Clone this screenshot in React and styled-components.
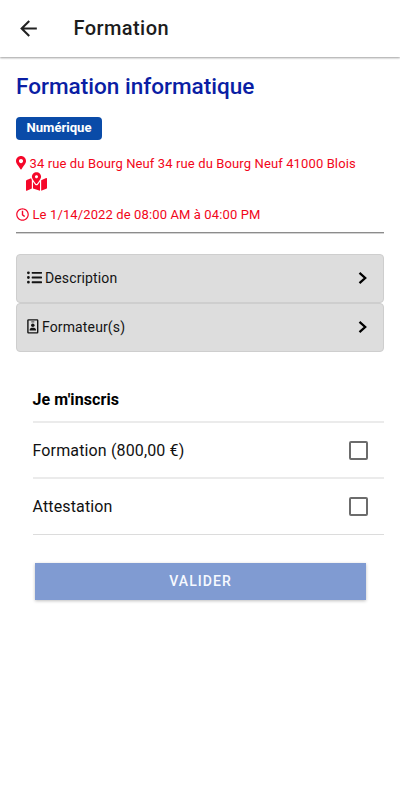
import React from 'react';
import styled, { createGlobalStyle } from 'styled-components';
import { MdArrowBack } from 'react-icons/md';
import { FaListUl, FaMapMarkedAlt, FaMapMarkerAlt, FaRegClock } from 'react-icons/fa';

const GlobalStyle = createGlobalStyle`
  * {
    box-sizing: border-box;
  }

  body {
    margin: 0;
    background: #fff;
    color: #000;
    font-family: Roboto, sans-serif;
  }
`;

const Page = styled.div`
  min-height: 800px;
  background: #fff;
`;

const Toolbar = styled.header`
  display: flex;
  align-items: center;
  height: 57px;
  padding-left: 16px;
  box-shadow: 0 1px 2px rgba(0, 0, 0, 0.38);
`;

const BackButton = styled.button`
  display: flex;
  padding: 0;
  border: none;
  background: none;
  color: #222;
  font-size: 25px;
`;

const ToolbarTitle = styled.h1`
  margin: 0 0 2px 32.5px;
  font-size: 20px;
  line-height: 24px;
  font-weight: 500;
  letter-spacing: 0.42px;
  color: #1c1c1c;
`;

const Content = styled.main`
  padding: 17px 16px 0;
`;

const CourseTitle = styled.h2`
  margin: 0;
  font-size: 22.55px;
  line-height: 26px;
  font-weight: 500;
  color: #0a1ea4;
`;

const Badge = styled.span`
  display: block;
  width: 86px;
  height: 23px;
  margin-top: 17px;
  border-radius: 4px;
  background: #0a4ba8;
  color: #fff;
  font-size: 13.1px;
  line-height: 22px;
  font-weight: 700;
  text-align: center;
`;

const InfoLine = styled.div`
  display: flex;
  align-items: center;
  gap: 3.5px;
  height: 18px;
  margin-top: ${(props) => props.$top};
  padding-left: ${(props) => props.$indent || 0};
  font-size: 13px;
  color: #f5082a;
  white-space: nowrap;

  svg {
    flex: none;
  }
`;

const PinIcon = styled(FaMapMarkerAlt)`
  width: 10px;
  height: 13.5px;
`;

const InfoText = styled.span`
  letter-spacing: 0.12px;
  color: #f2061a;
`;

const Divider = styled.hr`
  height: 2px;
  margin: 9px 0 20px;
  border: none;
  border-top: 1px solid #8c8c8c;
  background: #d2d2d2;
`;

const Panel = styled.button`
  display: flex;
  align-items: center;
  width: 100%;
  height: 49px;
  padding: 0 15px 2px 10px;
  border: 1px solid #cecece;
  border-radius: 4px;
  background: #ddd;
  color: #141414;
  font-family: inherit;
  font-size: 14px;
  text-align: left;
`;

const PanelLabel = styled.span`
  flex: 1;
  margin-left: 3px;
  letter-spacing: 0.13px;
`;

const Form = styled.form`
  margin: 24px 0 0 16.5px;
`;

const Row = styled.label`
  display: flex;
  align-items: center;
  justify-content: space-between;
  height: ${(props) => props.$height || '56px'};
  padding-right: 16px;
  border-bottom: ${(props) => props.$line || '2px solid #ebebeb'};
  font-size: 16px;
  letter-spacing: 0.14px;
  color: #111;
`;

const RowHeading = styled.strong`
  padding-top: 2px;
  font-size: 16px;
  font-weight: 700;
  letter-spacing: 0.1px;
  color: #000;
`;

const Checkbox = styled.input`
  appearance: none;
  width: 19px;
  height: 19px;
  margin: 0;
  border: 2px solid #6c6c6c;
  border-radius: 2px;
`;

const SubmitButton = styled.button`
  display: block;
  width: 331px;
  height: 37px;
  margin: 28px 0 0 2.5px;
  padding: 0 0 2px;
  border: none;
  background: #809bd2;
  box-shadow: 0 1px 3px rgba(0, 0, 0, 0.25);
  color: #f6f9ff;
  font-family: inherit;
  font-size: 14px;
  font-weight: 500;
  letter-spacing: 1.05px;
`;

const TrainerIcon = () => (
  <svg width="12" height="15" viewBox="0 0 12 15" fill="none">
    <rect x="0.9" y="0.9" width="9.8" height="13" rx="0.6" stroke="currentColor" strokeWidth="1.4" />
    <path d="M4.3 2.9h3" stroke="currentColor" strokeWidth="0.8" />
    <circle cx="5.8" cy="6.2" r="1.75" fill="currentColor" />
    <path d="M2.6 11.6v-.8c0-1.5 1.4-2.1 3.2-2.1s3.2.6 3.2 2.1v.8z" fill="currentColor" />
  </svg>
);

const Chevron = () => (
  <svg width="10" height="14" viewBox="0 0 10 14" fill="none">
    <path d="M1.5 1.8 7.2 7l-5.7 5.2" stroke="#000" strokeWidth="2.3" />
  </svg>
);

const options = ['Formation (800,00 €)', 'Attestation'];

const App = () => (
  <>
    <GlobalStyle />
    <Page>
      <Toolbar>
        <BackButton aria-label="Retour">
          <MdArrowBack />
        </BackButton>
        <ToolbarTitle>Formation</ToolbarTitle>
      </Toolbar>
      <Content>
        <CourseTitle>Formation informatique</CourseTitle>
        <Badge>Numérique</Badge>
        <InfoLine $top="14px">
          <PinIcon />
          <InfoText>34 rue du Bourg Neuf 34 rue du Bourg Neuf 41000 Blois</InfoText>
        </InfoLine>
        <InfoLine $top="0" $indent="10px">
          <FaMapMarkedAlt size={21} />
        </InfoLine>
        <InfoLine $top="15px">
          <FaRegClock size={13} />
          <InfoText>Le 1/14/2022 de 08:00 AM à 04:00 PM</InfoText>
        </InfoLine>
        <Divider />
        <Panel>
          <FaListUl size={15} />
          <PanelLabel>Description</PanelLabel>
          <Chevron />
        </Panel>
        <Panel>
          <TrainerIcon />
          <PanelLabel>Formateur(s)</PanelLabel>
          <Chevron />
        </Panel>
        <Form>
          <Row as="div" $height="47px">
            <RowHeading>Je m'inscris</RowHeading>
          </Row>
          {options.map((option, index) => (
            <Row key={option} $line={index === options.length - 1 ? '1px solid #dcdcdc' : undefined}>
              {option}
              <Checkbox type="checkbox" />
            </Row>
          ))}
          <SubmitButton type="button">VALIDER</SubmitButton>
        </Form>
      </Content>
    </Page>
  </>
);

export default App;
